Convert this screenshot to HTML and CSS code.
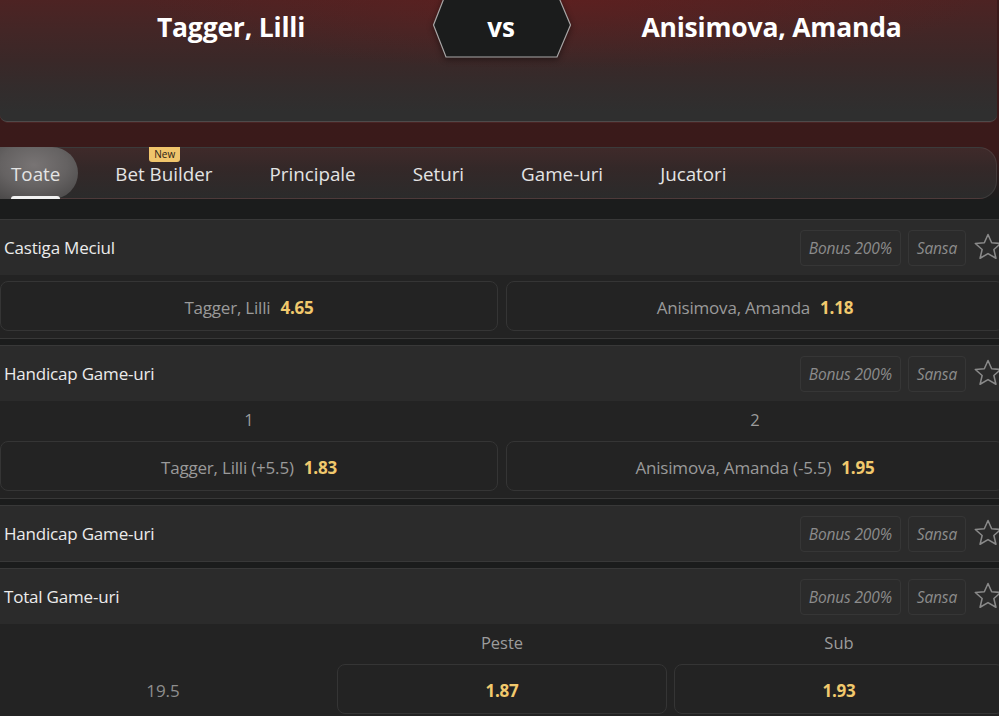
FILE: index.html
```html
<!DOCTYPE html>
<html lang="ro">
<head>
<meta charset="utf-8">
<title>Tagger, Lilli vs Anisimova, Amanda</title>
<link rel="stylesheet" href="styles.css">
</head>
<body>
<div class="page">
  <div class="top">
    <header class="match">
      <div class="player">Tagger, Lilli</div>
      <div class="versus">
        <svg class="hex" width="140" height="66" viewBox="0 0 140 66">
          <polygon points="1.5,33 14,1 125,1 138.5,33 125,65 14,65" fill="#1b1c1c" stroke="#a9a7a7" stroke-width="1.2"/>
        </svg>
        <span class="vs">vs</span>
      </div>
      <div class="player">Anisimova, Amanda</div>
    </header>
    <nav class="tabs">
      <div class="tab active">Toate</div>
      <div class="tab">Bet Builder<span class="badge">New</span></div>
      <div class="tab">Principale</div>
      <div class="tab">Seturi</div>
      <div class="tab">Game-uri</div>
      <div class="tab">Jucatori</div>
    </nav>
  </div>

  <main class="markets">
    <section class="market">
      <div class="market-head">
        <span class="market-title">Castiga Meciul</span>
        <div class="tools">
          <span class="chip">Bonus 200%</span>
          <span class="chip">Sansa</span>
          <svg class="star" width="32" height="32" viewBox="0 0 24 24"><path d="M12 2.6l2.75 6.2 6.75.6-5.1 4.45 1.55 6.6L12 16.95l-5.95 3.5 1.55-6.6-5.1-4.45 6.75-.6z" fill="none" stroke="#8a8a8a" stroke-width="1.15" stroke-linejoin="round"/></svg>
        </div>
      </div>
      <div class="market-body grid2">
        <div class="odd"><span class="name">Tagger, Lilli</span><span class="price">4.65</span></div>
        <div class="odd"><span class="name">Anisimova, Amanda</span><span class="price">1.18</span></div>
      </div>
    </section>

    <section class="market">
      <div class="market-head">
        <span class="market-title">Handicap Game-uri</span>
        <div class="tools">
          <span class="chip">Bonus 200%</span>
          <span class="chip">Sansa</span>
          <svg class="star" width="32" height="32" viewBox="0 0 24 24"><path d="M12 2.6l2.75 6.2 6.75.6-5.1 4.45 1.55 6.6L12 16.95l-5.95 3.5 1.55-6.6-5.1-4.45 6.75-.6z" fill="none" stroke="#8a8a8a" stroke-width="1.15" stroke-linejoin="round"/></svg>
        </div>
      </div>
      <div class="market-body grid2">
        <div class="col-label">1</div>
        <div class="col-label">2</div>
        <div class="odd"><span class="name">Tagger, Lilli (+5.5)</span><span class="price">1.83</span></div>
        <div class="odd"><span class="name">Anisimova, Amanda (-5.5)</span><span class="price">1.95</span></div>
      </div>
    </section>

    <section class="market">
      <div class="market-head">
        <span class="market-title">Handicap Game-uri</span>
        <div class="tools">
          <span class="chip">Bonus 200%</span>
          <span class="chip">Sansa</span>
          <svg class="star" width="32" height="32" viewBox="0 0 24 24"><path d="M12 2.6l2.75 6.2 6.75.6-5.1 4.45 1.55 6.6L12 16.95l-5.95 3.5 1.55-6.6-5.1-4.45 6.75-.6z" fill="none" stroke="#8a8a8a" stroke-width="1.15" stroke-linejoin="round"/></svg>
        </div>
      </div>
    </section>

    <section class="market">
      <div class="market-head">
        <span class="market-title">Total Game-uri</span>
        <div class="tools">
          <span class="chip">Bonus 200%</span>
          <span class="chip">Sansa</span>
          <svg class="star" width="32" height="32" viewBox="0 0 24 24"><path d="M12 2.6l2.75 6.2 6.75.6-5.1 4.45 1.55 6.6L12 16.95l-5.95 3.5 1.55-6.6-5.1-4.45 6.75-.6z" fill="none" stroke="#8a8a8a" stroke-width="1.15" stroke-linejoin="round"/></svg>
        </div>
      </div>
      <div class="market-body grid3">
        <div class="col-label"></div>
        <div class="col-label">Peste</div>
        <div class="col-label">Sub</div>
        <div class="line-val">19.5</div>
        <div class="odd"><span class="price">1.87</span></div>
        <div class="odd"><span class="price">1.93</span></div>
      </div>
    </section>
  </main>
</div>
</body>
</html>
```

FILE: styles.css
```css
* { box-sizing: border-box; }
html, body {
  margin: 0;
  padding: 0;
  background: #1b1c1c;
  overflow: hidden;
}
body {
  font-family: "Open Sans", "Noto Sans", sans-serif;
  color: #e6e6e6;
  width: 999px;
  height: 716px;
}
.page { width: 1004px; }

.top {
  width: 999px;
  background: linear-gradient(180deg, #3b1a1a 0px, #3a1a1a 150px, #2a1c1c 175px, #1b1c1c 200px);
}

.match {
  width: 997px;
  height: 122px;
  display: grid;
  grid-template-columns: 462px 78px 457px;
  align-items: start;
  border-bottom: 1px solid #4e4a4a;
  border-radius: 0 0 7px 7px;
  background:
    radial-gradient(ellipse 420px 70px at 560px 0px, rgba(110, 28, 28, 0.45), rgba(110, 28, 28, 0) 100%),
    linear-gradient(180deg, #4d2323 0%, #432626 25%, #3a2828 50%, #332c2c 72%, #2f2f2f 92%, #2f2f2f 100%);
  box-shadow: 0 6px 0 -5px #4a2424;
}
.player {
  text-align: center;
  font-weight: 700;
  font-size: 26.5px;
  line-height: 1;
  padding-top: 14px;
  color: #ffffff;
  letter-spacing: -0.2px;
}
.player:last-child { padding-left: 6px; }
.versus {
  position: relative;
  height: 58px;
}
.hex {
  position: absolute;
  left: -30px;
  top: -8px;
  filter: drop-shadow(0 2px 3px rgba(0,0,0,0.45));
}
.vs {
  position: absolute;
  left: 0;
  right: 0;
  top: 14px;
  text-align: center;
  font-weight: 700;
  font-size: 26px;
  line-height: 1;
  color: #fff;
}

.tabs {
  margin-top: 25px;
  width: 997px;
  height: 52px;
  display: flex;
  align-items: stretch;
  border: 1px solid rgba(255,255,255,0.08);
  border-left: none;
  border-radius: 0 18px 18px 0;
  background: linear-gradient(180deg, #3f2a2a 0%, #342828 40%, #2b2b2b 100%);
}
.tab {
  position: relative;
  display: flex;
  align-items: center;
  padding: 2px 28.5px 0;
  font-size: 18.8px;
  color: #e4e4e4;
  white-space: nowrap;
}
.tab.active {
  padding: 2px 18px 0 11px;
  margin-right: 37px;
  margin-top: -1px;
  margin-bottom: -1px;
  border-radius: 0 26px 26px 0;
  background: radial-gradient(ellipse 60px 40px at 34px 18px, #787474 0%, #656262 55%, #4c4a4a 100%);
}
.tab.active::after {
  content: "";
  position: absolute;
  left: 11px;
  right: 18px;
  bottom: 0;
  height: 3px;
  border-radius: 3px 3px 0 0;
  background: #f2f2f2;
}
.tab.active + .tab { padding-left: 0; }
.badge {
  position: absolute;
  top: -1px;
  left: 34px;
  height: 15px;
  padding: 0 5px;
  border-radius: 0 0 3px 3px;
  background: #f1c56c;
  color: #2a2114;
  font-size: 10px;
  line-height: 15px;
}

.markets {
  margin-top: 20px;
  width: 1004px;
}
.market {
  border-top: 1px solid #383838;
  border-bottom: 1px solid #383838;
  margin-bottom: 6px;
  background: #232323;
}
.market-head {
  height: 55px;
  display: flex;
  align-items: center;
  justify-content: space-between;
  padding: 0 0 0 4px;
  background: #2b2b2b;
}
.market-title {
  font-size: 17px;
  color: #ececec;
  letter-spacing: -0.2px;
}
.tools {
  display: flex;
  align-items: center;
  gap: 7px;
}
.chip {
  height: 36px;
  display: flex;
  align-items: center;
  padding: 0 8px;
  border: 1px solid #363636;
  border-radius: 4px;
  font-style: italic;
  font-size: 15.5px;
  color: #8c8c8c;
  letter-spacing: -0.15px;
}
.star { margin-left: -1px; margin-top: -1px; }

.market-body {
  display: grid;
  padding: 6px 0 7px;
  row-gap: 10px;
}
.grid2 { grid-template-columns: 1fr 1fr; column-gap: 8px; }
.grid3 { grid-template-columns: 1fr 1fr 1fr; column-gap: 7px; }
.col-label {
  height: 24px;
  text-align: center;
  font-size: 16.5px;
  line-height: 26px;
  color: #9c9c9c;
}
.odd {
  height: 50px;
  display: flex;
  align-items: center;
  justify-content: center;
  gap: 10px;
  border: 1px solid #353535;
  border-radius: 8px;
  background: #232323;
  padding-top: 2px;
}
.name {
  font-size: 17px;
  color: #9a9a9a;
  letter-spacing: -0.2px;
}
.price {
  font-size: 17px;
  font-weight: 700;
  color: #f1c96d;
  letter-spacing: -0.2px;
}
.line-val {
  display: flex;
  align-items: center;
  justify-content: center;
  font-size: 17px;
  color: #8e8e8e;
  padding: 2px 4px 0 0;
}
```
